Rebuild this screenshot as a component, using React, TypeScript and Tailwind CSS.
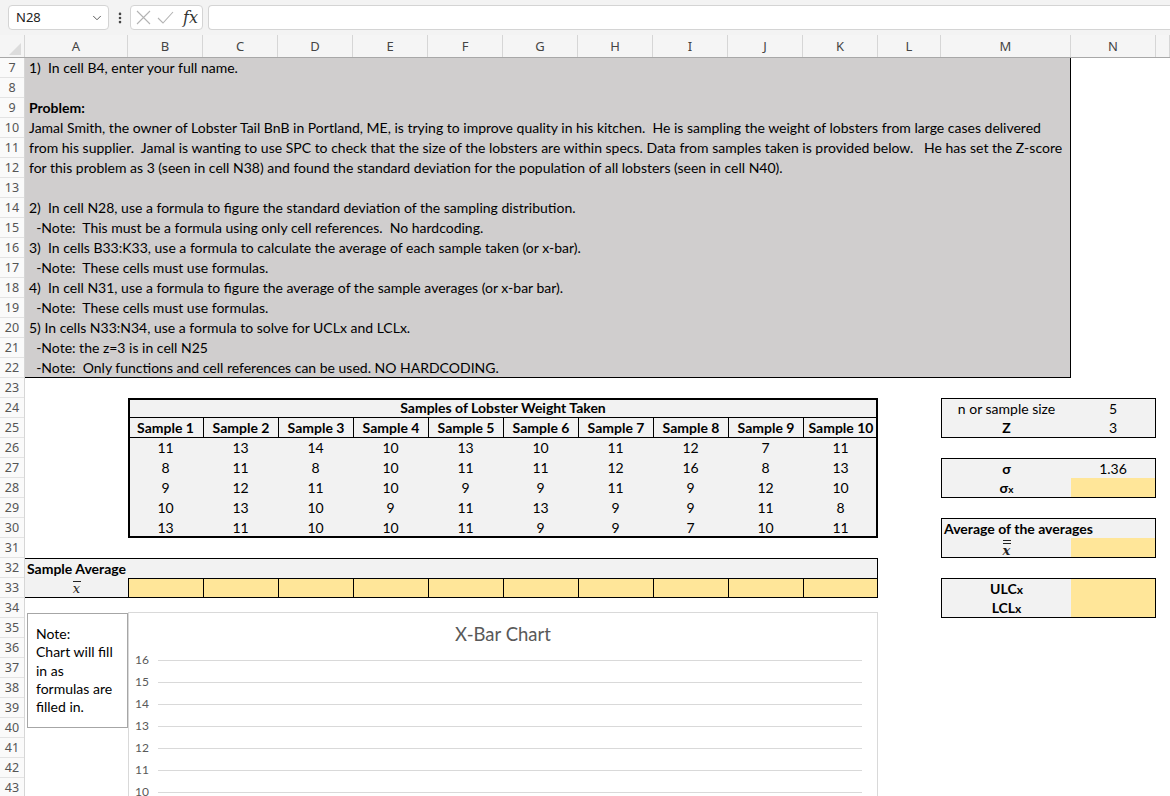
import React from "react";
import { ChevronDown, EllipsisVertical } from "lucide-react";

const HEADER_COLS: { label: string; cls: string }[] = [
  { label: "A", cls: "w-[103px]" },
  { label: "B", cls: "w-[75px]" },
  { label: "C", cls: "w-[75px]" },
  { label: "D", cls: "w-[75px]" },
  { label: "E", cls: "w-[75px]" },
  { label: "F", cls: "w-[75px]" },
  { label: "G", cls: "w-[75px]" },
  { label: "H", cls: "w-[75px]" },
  { label: "I", cls: "w-[75px]" },
  { label: "J", cls: "w-[75px]" },
  { label: "K", cls: "w-[75px]" },
  { label: "L", cls: "w-[63px]" },
  { label: "M", cls: "w-[130px]" },
  { label: "N", cls: "w-[85px]" },
  { label: "", cls: "flex-1" },
];

const ROWS = Array.from({ length: 37 }, (_, i) => i + 7);

const LINES: { text: string; bold?: boolean }[] = [
  { text: "1)  In cell B4, enter your full name." },
  { text: "" },
  { text: "Problem:", bold: true },
  {
    text:
      "Jamal Smith, the owner of Lobster Tail BnB in Portland, ME, is trying to improve quality in his kitchen.  He is sampling the weight of lobsters from large cases delivered",
  },
  {
    text:
      "from his supplier.  Jamal is wanting to use SPC to check that the size of the lobsters are within specs. Data from samples taken is provided below.   He has set the Z-score",
  },
  {
    text:
      "for this problem as 3 (seen in cell N38) and found the standard deviation for the population of all lobsters (seen in cell N40).",
  },
  { text: "" },
  { text: "2)  In cell N28, use a formula to figure the standard deviation of the sampling distribution." },
  { text: "  -Note:  This must be a formula using only cell references.  No hardcoding." },
  { text: "3)  In cells B33:K33, use a formula to calculate the average of each sample taken (or x-bar)." },
  { text: "  -Note:  These cells must use formulas." },
  { text: "4)  In cell N31, use a formula to figure the average of the sample averages (or x-bar bar)." },
  { text: "  -Note:  These cells must use formulas." },
  { text: "5) In cells N33:N34, use a formula to solve for UCLx and LCLx." },
  { text: "  -Note: the z=3 is in cell N25" },
  { text: "  -Note:  Only functions and cell references can be used. NO HARDCODING." },
];

const DATA = [
  [11, 13, 14, 10, 13, 10, 11, 12, 7, 11],
  [8, 11, 8, 10, 11, 11, 12, 16, 8, 13],
  [9, 12, 11, 10, 9, 9, 11, 9, 12, 10],
  [10, 13, 10, 9, 11, 13, 9, 9, 11, 8],
  [13, 11, 10, 10, 11, 9, 9, 7, 10, 11],
];

function XBar({ double = false, bold = false }: { double?: boolean; bold?: boolean }) {
  return (
    <span className="inline-flex flex-col items-center font-['DejaVu_Serif',serif] italic">
      <span className="flex flex-col gap-[2px] mb-[1px]">
        <span className="block h-px w-[8px] bg-[#222]" />
        {double && <span className="block h-px w-[8px] bg-[#222]" />}
      </span>
      <span className={`leading-[11px] text-[13px] ${bold ? "font-bold" : "font-normal"} text-[#222]`}>x</span>
    </span>
  );
}

export default function App() {
  return (
    <div className="w-[1170px] h-[796px] overflow-hidden bg-white font-['Lato',sans-serif] text-[14px] text-black">
      {/* Formula bar */}
      <div className="h-[35px] bg-[#f3f3f3] flex items-center pl-[8px] font-['Noto_Sans',sans-serif]">
        <div className="w-[101px] h-[25px] bg-white border border-[#d4d4d4] rounded-[4px] flex items-center justify-between pl-[7px] pr-[4px]">
          <span className="text-[13px] text-[#222]">N28</span>
          <ChevronDown size={14} strokeWidth={1.5} className="text-[#444]" />
        </div>
        <div className="w-[21px] flex justify-center">
          <EllipsisVertical size={14} strokeWidth={2.5} className="text-[#444]" />
        </div>
        <div className="w-[73px] h-[25px] bg-white border border-[#d4d4d4] rounded-[4px] flex items-center pl-[5px] gap-[6px]">
          <svg width="15" height="15" viewBox="0 0 15 15" className="shrink-0">
            <path d="M1 1 L14 14 M14 1 L1 14" stroke="#b3b3b3" strokeWidth="1.1" fill="none" />
          </svg>
          <svg width="17" height="13" viewBox="0 0 17 13" className="shrink-0">
            <path d="M1 7 L6 12 L16 1" stroke="#b3b3b3" strokeWidth="1.1" fill="none" />
          </svg>
          <span className="font-['DejaVu_Serif',serif] italic text-[16px] text-[#333] leading-none ml-[3px]">fx</span>
        </div>
        <div className="ml-[5px] flex-1 h-[25px] bg-white border border-[#d4d4d4] rounded-l-[4px] border-r-0" />
      </div>

      {/* Column headers */}
      <div className="flex h-[23px] bg-[#f5f5f5] border-b border-[#a8a8a8] font-['Noto_Sans',sans-serif] text-[13px] text-[#444]">
        <div className="w-[25px] shrink-0 border-r border-[#d6d6d6] relative">
          <div className="absolute right-[3px] bottom-[2px] w-0 h-0 border-l-[12px] border-l-transparent border-b-[12px] border-b-[#dcdcdc]" />
        </div>
        {HEADER_COLS.map((c, i) => (
          <div
            key={i}
            className={`${c.cls} shrink-0 border-r border-[#d6d6d6] flex items-center justify-center leading-none`}
          >
            {c.label}
          </div>
        ))}
      </div>

      {/* Body */}
      <div className="flex">
        <div className="w-[25px] shrink-0 border-r border-[#d6d6d6] bg-[#fafafa] font-['Noto_Sans',sans-serif] text-[12.5px] text-[#555]">
          {ROWS.map((r) => (
            <div key={r} className="h-[20px] border-b border-[#e3e3e3] flex items-end justify-center leading-[19px]">
              {r}
            </div>
          ))}
        </div>

        <div className="flex-1 grid grid-cols-[103px_repeat(10,75px)_63px_130px_85px_1fr] grid-rows-[repeat(37,20px)]">
          {/* Instructions block rows 7-22 */}
          <div className="col-[1/14] row-[1/17] bg-[#d0cece] border-r border-b border-black flex flex-col">
            {LINES.map((l, i) => (
              <div
                key={i}
                className={`h-[20px] shrink-0 leading-[20px] pl-[4px] whitespace-pre ${l.bold ? "font-bold" : ""}`}
              >
                {l.text}
              </div>
            ))}
          </div>

          {/* Samples table rows 24-30 */}
          <div className="col-[2/12] row-[18/25] bg-[#f2f2f2] shadow-[inset_0_0_0_2px_#000] grid grid-cols-10 grid-rows-[repeat(7,20px)]">
            <div className="col-span-10 border-b border-black font-bold text-center leading-[20px]">
              Samples of Lobster Weight Taken
            </div>
            {Array.from({ length: 10 }, (_, i) => (
              <div
                key={`h${i}`}
                className={`border-b border-black font-bold text-center leading-[19px] ${i > 0 ? "border-l" : ""}`}
              >
                Sample {i + 1}
              </div>
            ))}
            {DATA.flatMap((row, r) =>
              row.map((v, c) => (
                <div key={`${r}-${c}`} className="text-center leading-[20px]">
                  {v}
                </div>
              ))
            )}
          </div>

          {/* Sample average rows 32-33 */}
          <div className="col-[1/12] row-[26/27] bg-[#f2f2f2] border-t border-r border-black font-bold pl-[2px] leading-[20px]">
            Sample Average
          </div>
          <div className="col-[1/2] row-[27/28] bg-[#f2f2f2] border-b border-black flex items-center justify-center">
            <XBar />
          </div>
          <div className="col-[2/12] row-[27/28] grid grid-cols-10">
            {Array.from({ length: 10 }, (_, i) => (
              <div
                key={i}
                className={`bg-[#ffe699] border-t border-b border-l border-black ${i === 9 ? "border-r" : ""}`}
              />
            ))}
          </div>

          {/* Right table 1 rows 24-25 */}
          <div className="col-[13/15] row-[18/20] bg-[#f2f2f2] border border-black grid grid-cols-[129px_1fr] grid-rows-2">
            <div className="text-center leading-[19px]">n or sample size</div>
            <div className="text-center leading-[19px]">5</div>
            <div className="text-center leading-[19px] font-bold">Z</div>
            <div className="text-center leading-[19px]">3</div>
          </div>

          {/* Right table 2 rows 27-28 */}
          <div className="col-[13/15] row-[21/23] bg-[#f2f2f2] border border-black grid grid-cols-[129px_1fr] grid-rows-2">
            <div className="text-center leading-[19px] font-bold">σ</div>
            <div className="text-center leading-[19px]">1.36</div>
            <div className="text-center leading-[19px] font-bold">
              σ<span className="text-[10px]">x</span>
            </div>
            <div className="bg-[#ffe699]" />
          </div>

          {/* Right table 3 rows 30-31 */}
          <div className="col-[13/15] row-[24/26] bg-[#f2f2f2] border border-black grid grid-cols-[129px_1fr] grid-rows-2">
            <div className="col-span-2 font-bold leading-[19px] pl-[2px] whitespace-nowrap">Average of the averages</div>
            <div className="flex items-center justify-center">
              <XBar double bold />
            </div>
            <div className="bg-[#ffe699]" />
          </div>

          {/* Right table 4 rows 33-34 */}
          <div className="col-[13/15] row-[27/29] bg-[#f2f2f2] border border-black grid grid-cols-[129px_1fr] grid-rows-2">
            <div className="text-center leading-[19px] font-bold">
              ULC<span className="text-[12px]">x</span>
            </div>
            <div className="row-span-2 bg-[#ffe699]" />
            <div className="text-center leading-[19px] font-bold">
              LCL<span className="text-[12px]">x</span>
            </div>
          </div>

          {/* Note box */}
          <div className="col-[1/2] row-[28/36] self-start justify-self-start mt-[15px] ml-[2px] w-[101px] h-[115px] border border-[#a6a6a6] bg-white pt-[11px] pl-[8px] leading-[18.3px] text-[14px]">
            <div>Note:</div>
            <div>Chart will fill</div>
            <div>in as</div>
            <div>formulas are</div>
            <div>filled in.</div>
          </div>

          {/* Chart */}
          <div className="col-[2/12] row-[28/38] self-start mt-[14px] h-[200px] border border-[#d9d9d9] bg-white">
            <div className="pt-[10px] text-center text-[18.5px] leading-[22px] text-[#595959]">X-Bar Chart</div>
            <div className="mt-[4px] flex flex-col">
              {[16, 15, 14, 13, 12, 11, 10].map((n) => (
                <div key={n} className="h-[22px] flex items-center">
                  <div className="w-[29px] pl-[6px] text-[12px] leading-none text-[#595959]">{n}</div>
                  <div className="flex-1 h-px bg-[#d9d9d9] mr-[15px]" />
                </div>
              ))}
            </div>
          </div>
        </div>
      </div>
    </div>
  );
}
